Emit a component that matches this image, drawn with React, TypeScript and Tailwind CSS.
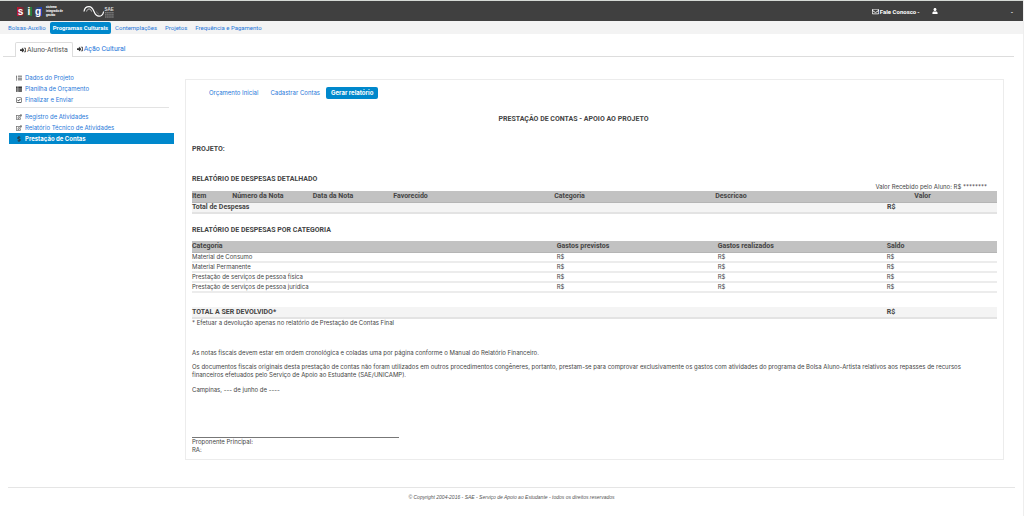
import type { ReactNode } from 'react';
import type { IconType } from 'react-icons';
import { FaListOl, FaThList, FaRegCheckSquare, FaRegEdit, FaDollarSign, FaSignInAlt, FaRegEnvelope, FaUser } from 'react-icons/fa';

function SaeLogo() {
  return (
    <svg viewBox="0 0 32 13" className="h-[13px] w-[32px]" fill="none" aria-label="SAE">
      <path d="M1 6.5C1.5 3 4 1.6 6 1.6C9 1.6 10 4 11 6.5C12 9 13 11.2 16 11.2C18 11.2 20.3 9.5 20.6 6.5" stroke="#fff" strokeWidth="1.2" />
      <path d="M3.6 6.5C4 4.8 5 4 6.2 4C7.2 4 8 4.8 8.5 6.5" stroke="#fff" strokeWidth="0.7" />
      <path d="M13.6 6.5C14 8 15 9 16 9" stroke="#999" strokeWidth="0.6" />
      <path d="M22 7.8H31M22 9.9H31M22 12H31" stroke="#aaa" strokeWidth="0.8" strokeDasharray="1.6 0.5" />
      <text x="21.5" y="6" fill="#ddd" fontSize="4.5" fontWeight="bold" fontFamily="Liberation Sans, sans-serif">SAE</text>
    </svg>
  );
}

function Header() {
  return (
    <header className="flex h-[21px] items-center border-t border-[#d5d9d5] bg-[#404040] pl-[17px] pr-[10px] text-white">
      <a href="#inicio" className="flex items-center gap-[4px]" aria-label="sig">
        <span className="flex gap-[2px] font-['Liberation_Sans'] text-[10px] font-bold leading-[9px]">
          <span className="w-[7px] bg-linear-to-r from-[#c41230] to-[#5c2a35] text-center">s</span>
          <span className="w-[6px] bg-linear-to-r from-[#404040] to-[#14883c] text-center">i</span>
          <span className="w-[8px] bg-linear-to-r from-[#404040] to-[#1f3fc0] text-center">g</span>
        </span>
        <span className="w-[24px] text-[3px] font-bold leading-[4px]">
          sistema<br />integrado de<br />gestão
        </span>
      </a>
      <a href="#sae" className="ml-[13px]"><SaeLogo /></a>
      <div className="ml-auto flex items-center text-[6px] font-bold">
        <button className="flex items-center gap-[1px]"><FaRegEnvelope size={7} />Fale Conosco <span>-</span></button>
        <button className="ml-[12px]" aria-label="Usuário"><FaUser size={6} /></button>
        <button className="ml-[73px]" aria-label="Opções">-</button>
      </div>
    </header>
  );
}

const navItems = ['Bolsas-Auxílio', 'Programas Culturais', 'Contemplações', 'Projetos', 'Frequência e Pagamento'];

function Nav() {
  return (
    <nav className="flex h-[13px] items-center bg-[#f3f3f3] pl-[4px] text-[6px]">
      {navItems.map((label, i) => (
        <a
          key={label}
          href="#nav"
          className={i === 1 ? 'rounded-[2px] bg-[#0088cc] px-[3px] font-bold leading-[12px] text-white' : 'px-[4px] leading-[12px] text-[#2677d9]'}
        >
          {label}
        </a>
      ))}
    </nav>
  );
}

function Tabs() {
  return (
    <div className="mt-[8px] mr-[9px] ml-[3px] flex border-b border-[#ddd] pl-[12px] text-[7px] leading-[14px]">
      <a href="#aluno" className="-mb-px flex items-center gap-[1px] rounded-t-[2px] border border-b-0 border-[#ddd] bg-white px-[4px] text-[#555]">
        <FaSignInAlt size={6} className="text-[#333]" />Aluno-Artista
      </a>
      <a href="#acao" className="flex items-center gap-[1px] px-[4px] text-[#2677d9]">
        <FaSignInAlt size={6} className="text-[#333]" />Ação Cultural
      </a>
    </div>
  );
}

function SideLink({ icon: Icon, active, children }: { icon: IconType; active?: boolean; children: ReactNode }) {
  return (
    <li>
      <a
        href="#item"
        className={active ? 'flex h-[11px] items-center gap-[3px] bg-[#0088cc] pl-[7px] font-bold text-white' : 'flex h-[11px] items-center gap-[3px] pl-[7px] text-[#2677d9]'}
      >
        <Icon size={6} className="text-[#333]" />
        {children}
      </a>
    </li>
  );
}

function Sidebar() {
  return (
    <aside className="mt-[-7px] w-[165px] shrink-0">
      <ul>
        <SideLink icon={FaListOl}>Dados do Projeto</SideLink>
        <SideLink icon={FaThList}>Planilha de Orçamento</SideLink>
        <SideLink icon={FaRegCheckSquare}>Finalizar e Enviar</SideLink>
      </ul>
      <hr className="mt-[2px] mr-[5px] mb-[3px] ml-[7px] border-[#e3e3e3]" />
      <ul>
        <SideLink icon={FaRegEdit}>Registro de Atividades</SideLink>
        <SideLink icon={FaRegEdit}>Relatório Técnico de Atividades</SideLink>
        <SideLink icon={FaDollarSign} active>Prestação de Contas</SideLink>
      </ul>
    </aside>
  );
}

const rows = ['Material de Consumo', 'Material Permanente', 'Prestação de serviços de pessoa física', 'Prestação de serviços de pessoa jurídica'];
const headClass = "h-[11px] border-b border-[#b5b5b5] bg-[#c2c2c2] text-left font-['Roboto'] text-[7px] leading-[8px]";
const totalClass = "h-[11px] border-b-2 border-[#e3e3e3] bg-[#f4f4f4] font-['Roboto'] text-[7px] font-bold leading-[8px]";

function DetailTable() {
  return (
    <table className="w-full table-fixed">
      <colgroup>
        <col className="w-[5%]" />
        <col className="w-[10%]" />
        <col className="w-[10%]" />
        <col className="w-[20%]" />
        <col className="w-[20%]" />
        <col className="w-[16.5%]" />
        <col />
      </colgroup>
      <thead>
        <tr className={headClass}>
          <th>Item</th>
          <th>Número da Nota</th>
          <th>Data da Nota</th>
          <th>Favorecido</th>
          <th>Categoria</th>
          <th>Descricao</th>
          <th className="text-center">Valor</th>
        </tr>
      </thead>
      <tbody>
        <tr className={totalClass}>
          <td colSpan={6}>Total de Despesas</td>
          <td className="pl-[39px]">R$</td>
        </tr>
      </tbody>
    </table>
  );
}

function CategoryTable() {
  return (
    <table className="w-full table-fixed">
      <colgroup>
        <col className="w-[45.3%]" />
        <col className="w-[20%]" />
        <col className="w-[21%]" />
        <col />
      </colgroup>
      <thead>
        <tr className={headClass}>
          <th>Categoria</th>
          <th>Gastos previstos</th>
          <th>Gastos realizados</th>
          <th>Saldo</th>
        </tr>
      </thead>
      <tbody>
        {rows.map((r) => (
          <tr key={r} className="h-[10px] border-b-2 border-[#ececec] leading-[8px]">
            <td>{r}</td>
            <td>R$</td>
            <td>R$</td>
            <td>R$</td>
          </tr>
        ))}
        <tr className="h-[15px]">
          <td colSpan={4} />
        </tr>
        <tr className={totalClass}>
          <td colSpan={3}>TOTAL A SER DEVOLVIDO*</td>
          <td>R$</td>
        </tr>
      </tbody>
    </table>
  );
}

function Heading({ children }: { children: ReactNode }) {
  return <h2 className="font-['Roboto'] text-[7px] font-bold leading-[8px]">{children}</h2>;
}

function Report() {
  return (
    <main className="min-w-0 flex-1 border border-[#ececec] px-[6px] pt-[7px] pb-[5px] text-[#444]">
      <div className="flex items-center pl-[11px] leading-[12px]">
        <a href="#orcamento" className="px-[6px] text-[#2677d9]">Orçamento Inicial</a>
        <a href="#contas" className="px-[6px] text-[#2677d9]">Cadastrar Contas</a>
        <a href="#relatorio" className="rounded-[2px] bg-[#0088cc] px-[5px] font-bold text-white">Gerar relatório</a>
      </div>
      <h1 className="mt-[16px] pr-[42px] text-center font-['Roboto'] text-[7px] font-bold leading-[8px]">PRESTAÇÃO DE CONTAS - APOIO AO PROJETO</h1>
      <div className="mt-[22px]"><Heading>PROJETO:</Heading></div>
      <div className="mt-[22px]"><Heading>RELATÓRIO DE DESPESAS DETALHADO</Heading></div>
      <p className="pr-[10px] text-right leading-[8px]">Valor Recebido pelo Aluno: R$ ********</p>
      <DetailTable />
      <div className="mt-[12px] mb-[7px]"><Heading>RELATÓRIO DE DESPESAS POR CATEGORIA</Heading></div>
      <CategoryTable />
      <p className="leading-[8px]">* Efetuar a devolução apenas no relatório de Prestação de Contas Final</p>
      <p className="mt-[22px] leading-[8px]">As notas fiscais devem estar em ordem cronológica e coladas uma por página conforme o Manual do Relatório Financeiro.</p>
      <p className="mt-[6px] leading-[8px]">
        Os documentos fiscais originais desta prestação de contas não foram utilizados em outros procedimentos congêneres, portanto, prestam-se para comprovar exclusivamente os gastos com atividades do programa de Bolsa Aluno-Artista relativos aos repasses de recursos<br />
        financeiros efetuados pelo Serviço de Apoio ao Estudante (SAE/UNICAMP).
      </p>
      <p className="mt-[7px] leading-[8px]">Campinas, --- de junho de ----</p>
      <div className="mt-[43px] w-[207px] border-t border-[#777] leading-[8px]">
        <p>Proponente Principal:</p>
        <p>RA:</p>
      </div>
    </main>
  );
}

export default function App() {
  return (
    <div className="min-h-screen border-r border-[#eee] bg-white font-['Roboto',sans-serif]">
      <Header />
      <Nav />
      <Tabs />
      <div className="mt-[22px] mr-[19px] ml-[9px] flex items-start gap-[11px] font-['Inter',sans-serif] text-[6px]">
        <Sidebar />
        <Report />
      </div>
      <footer className="mt-[27px] mr-[8px] ml-[8px] border-t border-[#e5e5e5] pt-[5px] text-center font-['Liberation_Sans',sans-serif] text-[5px] italic leading-[8px] text-[#555]">
        © Copyright 2004-2016 - SAE - Serviço de Apoio ao Estudante - todos os direitos reservados
      </footer>
    </div>
  );
}
